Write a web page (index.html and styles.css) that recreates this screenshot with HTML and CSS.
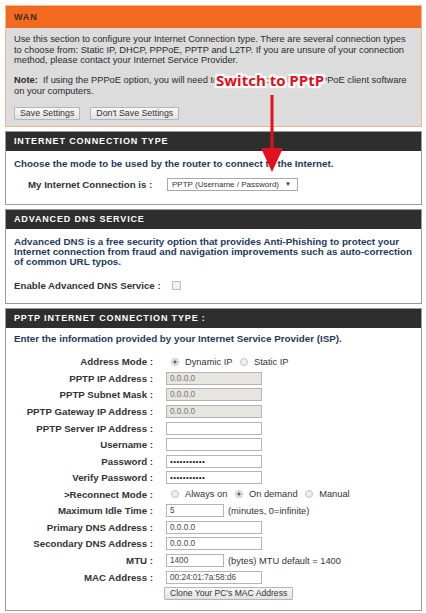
FILE: index.html
```html
<!DOCTYPE html>
<html lang="en">
<head>
    <meta charset="UTF-8" />
    <meta name="viewport" content="width=device-width, initial-scale=1.0">
    <title>WAN</title>
    <link rel="stylesheet" href="styles.css">
</head>
<body>
    <div class="page">
        <!-- WAN -->
        <div class="box box-wan">
            <div class="box-title">WAN</div>
            <div class="box-body">
                <p class="intro">Use this section to configure your Internet Connection type. There are several connection types to choose from: Static IP, DHCP, PPPoE, PPTP and L2TP. If you are unsure of your connection method, please contact your Internet Service Provider.</p>
                <p class="intro"><b>Note:</b>&nbsp; If using the PPPoE option, you will need to remove or disable any PPPoE client software on your computers.</p>
                <div class="actions">
                    <button class="btn">Save Settings</button>
                    <button class="btn">Don't Save Settings</button>
                </div>
            </div>
        </div>

        <!-- connection type -->
        <div class="box">
            <div class="box-title dark">INTERNET CONNECTION TYPE</div>
            <div class="box-body box-conn">
                <p class="lead">Choose the mode to be used by the router to connect to the Internet.</p>
                <div class="conn-row">
                    <span class="label">My Internet Connection is :</span>
                    <span class="select">PPTP (Username / Password)<span class="caret">&#9660;</span></span>
                </div>
            </div>
        </div>

        <!-- advanced dns -->
        <div class="box">
            <div class="box-title dark">ADVANCED DNS SERVICE</div>
            <div class="box-body box-dns">
                <p class="lead">Advanced DNS is a free security option that provides Anti-Phishing to protect your Internet connection from fraud and navigation improvements such as auto-correction of common URL typos.</p>
                <div class="dns-row">
                    <span class="label">Enable Advanced DNS Service :</span>
                    <span class="check"></span>
                </div>
            </div>
        </div>

        <!-- pptp -->
        <div class="box box-pptp">
            <div class="box-title dark">PPTP INTERNET CONNECTION TYPE :</div>
            <div class="box-body">
                <p class="lead">Enter the information provided by your Internet Service Provider (ISP).</p>
                <div class="form">
                    <span class="label">Address Mode :</span>
                    <span class="field"><span class="radio on"></span>Dynamic IP <span class="radio"></span>Static IP</span>

                    <span class="label">PPTP IP Address :</span>
                    <span class="field"><span class="input off">0.0.0.0</span></span>

                    <span class="label">PPTP Subnet Mask :</span>
                    <span class="field"><span class="input off">0.0.0.0</span></span>

                    <span class="label">PPTP Gateway IP Address :</span>
                    <span class="field"><span class="input off">0.0.0.0</span></span>

                    <span class="label">PPTP Server IP Address :</span>
                    <span class="field"><span class="input"></span></span>

                    <span class="label">Username :</span>
                    <span class="field"><span class="input"></span></span>

                    <span class="label">Password :</span>
                    <span class="field"><span class="input dots">&bull;&bull;&bull;&bull;&bull;&bull;&bull;&bull;&bull;&bull;&bull;</span></span>

                    <span class="label">Verify Password :</span>
                    <span class="field"><span class="input dots">&bull;&bull;&bull;&bull;&bull;&bull;&bull;&bull;&bull;&bull;&bull;</span></span>

                    <span class="label">&gt;Reconnect Mode :</span>
                    <span class="field"><span class="radio"></span>Always on <span class="radio on"></span>On demand <span class="radio"></span>Manual</span>

                    <span class="label">Maximum Idle Time :</span>
                    <span class="field"><span class="input short">5</span>(minutes, 0=infinite)</span>

                    <span class="label">Primary DNS Address :</span>
                    <span class="field"><span class="input">0.0.0.0</span></span>

                    <span class="label">Secondary DNS Address :</span>
                    <span class="field"><span class="input">0.0.0.0</span></span>

                    <span class="label">MTU :</span>
                    <span class="field"><span class="input short">1400</span>(bytes) MTU default = 1400</span>

                    <span class="label">MAC Address :</span>
                    <span class="field"><span class="input">00:24:01:7a:58:d6</span></span>

                    <span class="label"></span>
                    <span class="field"><button class="btn clone">Clone Your PC's MAC Address</button></span>
                </div>
            </div>
        </div>

        <!-- annotation drawn over the screenshot -->
        <div class="note-tag">Switch to PPtP</div>
        <svg class="note-arrow" width="30" height="82" viewBox="0 0 30 82">
            <line x1="15" y1="2" x2="15" y2="62" stroke="#e0101e" stroke-width="3" />
            <polygon points="4,55 26,55 15,79" fill="#e0101e" />
        </svg>
    </div>
</body>
</html>
```

FILE: styles.css
```css
body {
    margin: 0;
    padding: 0;
    background-color: #fff;
    font-family: Tahoma, 'Liberation Sans', Arial, sans-serif;
    font-size: 9.3px;
    color: #333;
}

.page {
    position: relative;
    width: 417px;
    padding: 5px 4px 5px 5px;
}

.box {
    border: 1px solid #9a9a9a;
    background-color: #fff;
    margin-bottom: 4px;
}

.box-title {
    font-weight: bold;
    font-size: 9px;
    line-height: 19px;
    padding-left: 8px;
    letter-spacing: 0.85px;
}

.box-title.dark {
    background-color: #2e2e2e;
    color: #fff;
}

.box-body {
    padding: 6px 8px 8px 8px;
}

p {
    margin: 0;
}

/* WAN 头部 */
.box-wan {
    border-color: #f5b48e;
    background-color: #dcdcdc;
}

.box-wan .box-title {
    background-color: #f26a1f;
    color: #3b2a20;
    line-height: 22px;
}

.box-wan .box-body {
    padding-bottom: 6px;
}

.intro {
    line-height: 10.7px;
    margin-bottom: 9px;
    color: #2a2a2a;
}

.actions {
    display: flex;
    gap: 10px;
    padding-top: 1px;
}

.btn {
    font-family: inherit;
    font-size: 8.8px;
    color: #333;
    height: 13px;
    padding: 0 5px;
    border: 1px solid #b5b5b5;
    border-radius: 1px;
    background: linear-gradient(#f8f8f8, #e2e2e2);
    line-height: 11px;
}

.lead {
    color: #1e3a5c;
    font-weight: bold;
    font-size: 9.8px;
    line-height: 10px;
}

.label {
    font-weight: bold;
    font-size: 9.7px;
    color: #333;
}

.box-conn {
    padding-top: 8px;
    padding-bottom: 11px;
}

.conn-row {
    display: flex;
    align-items: center;
    padding: 9px 0 2px 14px;
}

.conn-row .label {
    width: 139px;
}

.select {
    position: relative;
    width: 125px;
    height: 11px;
    line-height: 11px;
    padding-left: 4px;
    border: 1px solid #a9a9a9;
    background-color: #fff;
    font-size: 8px;
}

.caret {
    position: absolute;
    right: 6px;
    top: 0;
    font-size: 6px;
}

.box-dns {
    padding-top: 8px;
    padding-bottom: 9px;
}

.dns-row {
    display: flex;
    align-items: center;
    padding: 13px 0 3px 0;
}

.dns-row .label {
    width: 158px;
}

.check {
    width: 7px;
    height: 7px;
    border: 1px solid #b9b9b9;
    border-radius: 1px;
    background-color: #f2f2f2;
}

/* PPTP 表单 */
.form {
    display: grid;
    grid-template-columns: 139px 1fr;
    grid-auto-rows: 16.57px;
    column-gap: 13px;
    align-items: center;
    margin-top: 10px;
}

.form .label {
    text-align: right;
}

.field {
    display: flex;
    align-items: center;
    white-space: pre;
}

.input {
    display: inline-block;
    box-sizing: border-box;
    width: 96px;
    height: 13px;
    line-height: 11px;
    padding-left: 3px;
    border: 1px solid #b4b4b4;
    background-color: #fff;
    font-size: 8.2px;
    color: #444;
}

.input.off {
    background-color: #e7e5df;
    color: #777;
}

.input.short {
    width: 58px;
    margin-right: 4px;
}

.input.dots {
    font-size: 8px;
    letter-spacing: 0.4px;
    color: #222;
}

.radio {
    display: inline-block;
    box-sizing: border-box;
    width: 8px;
    height: 8px;
    margin: 0 6px 0 5px;
    border: 1px solid #c3c3c3;
    border-radius: 50%;
    background-color: #eee;
}

.radio.on {
    background: radial-gradient(circle, #666 0, #666 1.4px, #eee 1.8px);
}

.clone {
    font-size: 8.6px;
    margin-left: -2px;
}

.box-pptp .box-body {
    padding-bottom: 8px;
}

/* 红色标注 */
.note-tag {
    position: absolute;
    left: 216px;
    top: 71px;
    font-family: 'Open Sans', 'Liberation Sans', sans-serif;
    font-weight: bold;
    font-size: 15px;
    line-height: 18px;
    color: #e0101e;
    text-shadow: 0 0 2px #fff, 2px 2px 1px #fff, -2px -2px 1px #fff, 2px -2px 1px #fff, -2px 2px 1px #fff, 0 2px 1px #fff, 0 -2px 1px #fff, 2px 0 1px #fff, -2px 0 1px #fff;
}

.note-arrow {
    position: absolute;
    left: 257px;
    top: 93px;
}
```
